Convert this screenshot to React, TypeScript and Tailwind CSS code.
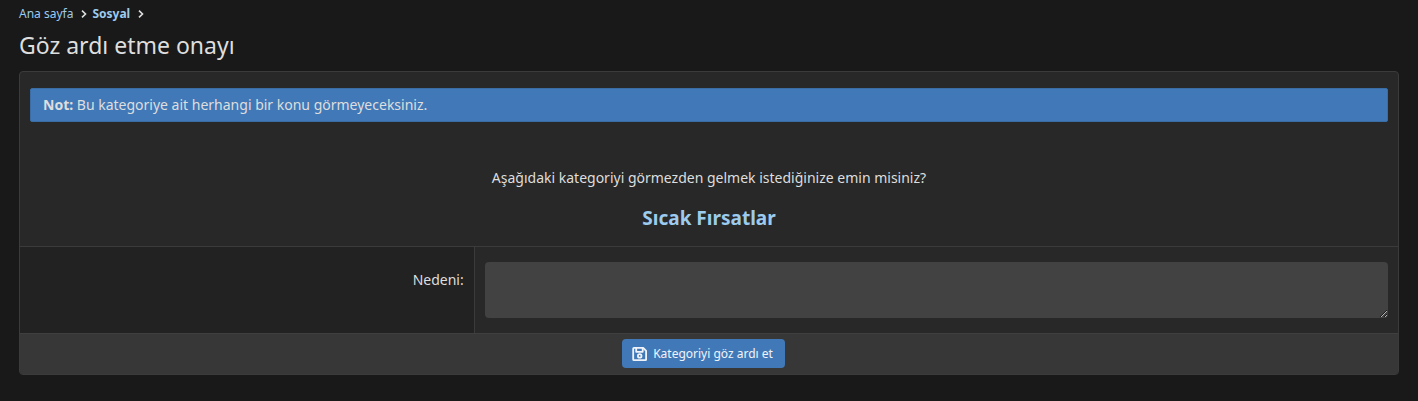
function Chevron() {
  return (
    <svg className="size-2 text-[#dedede]" viewBox="0 0 8 8" fill="none" stroke="currentColor" strokeWidth="1.6" aria-hidden="true">
      <path d="M2 0.7 5.5 4 2 7.3" />
    </svg>
  );
}

function SaveIcon() {
  return (
    <svg className="h-4 w-4" viewBox="0 0 16 16" fill="none" stroke="currentColor" strokeWidth="1.8" strokeLinejoin="round" aria-hidden="true">
      <path d="M2 1.9H11.2L14.1 4.8V13.5Q14.1 14.1 13.5 14.1H2Q1.2 14.1 1.2 13.5V2.5Q1.2 1.9 2 1.9Z" />
      <path d="M4.2 2V5.8H10.7V2" />
      <circle cx="7.7" cy="9.9" r="1.8" />
    </svg>
  );
}

export default function App() {
  return (
    <div className="min-h-screen bg-[#191919] px-[19px] pt-1 pb-6 font-['Noto_Sans',sans-serif] text-sm text-[#dedede]">
      <nav aria-label="Breadcrumb">
        <ol className="flex items-center text-xs leading-5 text-[#9ccbee]">
          <li className="flex items-center gap-[7px]">
            <a href="#">Ana sayfa</a>
            <Chevron />
          </li>
          <li className="ml-1 flex items-center gap-[7px]">
            <a href="#" className="font-bold">Sosyal</a>
            <Chevron />
          </li>
        </ol>
      </nav>
      <h1 className="mt-1 text-[23px] leading-[34px]">Göz ardı etme onayı</h1>
      <form className="mt-[9px] overflow-hidden rounded border border-[#3b3b3b] bg-[#282828]" onSubmit={(e) => e.preventDefault()}>
        <div className="px-[10px] pt-4 pb-[14px]">
          <p className="rounded-xs border border-[#3a6da6] bg-[#4179b8] px-3 py-[6px] leading-5">
            <strong>Not:</strong> Bu kategoriye ait herhangi bir konu görmeyeceksiniz.
          </p>
          <div className="mt-11 text-center leading-6">
            <p>Aşağıdaki kategoriyi görmezden gelmek istediğinize emin misiniz?</p>
            <a href="#" className="mt-4 inline-block text-[19px] leading-6 font-bold text-[#9ccbee]">Sıcak Fırsatlar</a>
          </div>
        </div>
        <div className="flex border-t border-[#3b3b3b]">
          <div className="w-[33%] border-r border-[#3b3b3b] bg-[#222222] px-[10px] pt-[22px] text-right leading-[22px]">
            <label htmlFor="reason">Nedeni:</label>
          </div>
          <div className="flex-1 px-[10px] py-[15px]">
            <textarea id="reason" rows={2} className="block h-14 w-full resize-y rounded bg-[#424242] px-2 py-1 outline-none scheme-dark" />
          </div>
        </div>
        <div className="flex justify-center border-t border-[#3f3f3f] bg-[#373737] pt-[5px] pr-[11px] pb-[6px]">
          <button type="submit" className="flex items-center gap-[5px] rounded bg-[#4179b8] pr-3 pl-[10px] py-1 text-xs leading-[21px] text-[#f0f4fa]">
            <SaveIcon />
            Kategoriyi göz ardı et
          </button>
        </div>
      </form>
    </div>
  );
}
